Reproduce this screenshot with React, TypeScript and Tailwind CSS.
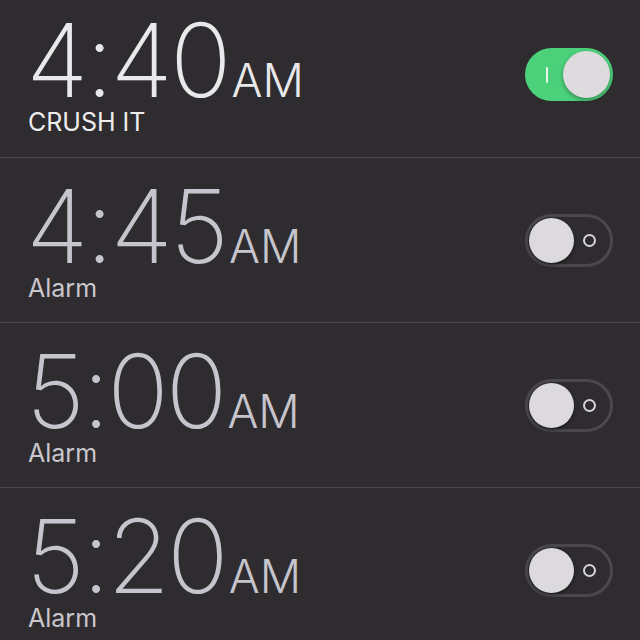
import React from 'react';

type Alarm = { time: string; label: string; on: boolean };

const ALARMS: Alarm[] = [
  { time: '4:40', label: 'CRUSH IT', on: true },
  { time: '4:45', label: 'Alarm', on: false },
  { time: '5:00', label: 'Alarm', on: false },
  { time: '5:20', label: 'Alarm', on: false },
];

function Toggle({ on }: { on: boolean }) {
  if (on) {
    return (
      <div className="relative h-[53px] w-[88px] shrink-0 rounded-full bg-[#4cd17b]">
        <span className="absolute left-[21px] top-[19px] h-[16px] w-[2px] rounded bg-[#e6f7ea]" />
        <span className="absolute right-[3px] top-[3px] h-[47px] w-[47px] rounded-full bg-[#dddbde] shadow-[0_2px_4px_rgba(0,0,0,0.35)]" />
      </div>
    );
  }
  return (
    <div className="relative h-[53px] w-[88px] shrink-0 rounded-full border-[3px] border-[#4a474d] bg-[#2f2c2f]">
      <span className="absolute left-[1px] top-[1px] h-[45px] w-[45px] rounded-full bg-[#dcdadd] shadow-[0_2px_4px_rgba(0,0,0,0.4)]" />
      <span className="absolute right-[14px] top-[17px] h-[13px] w-[13px] rounded-full border-2 border-[#d6d4d9]" />
    </div>
  );
}

function AlarmRow({ alarm, first }: { alarm: Alarm; first: boolean }) {
  const timeColor = alarm.on ? 'text-[#e9e8ea]' : 'text-[#c6c4cc]';
  const labelColor = alarm.on ? 'text-[#ececee]' : 'text-[#c9c7cd]';
  return (
    <div
      className={`flex items-center justify-between pl-[26px] pr-[27px] ${
        first ? 'h-[157px] pb-[8px]' : 'h-[165px] border-t border-[#4a474b]'
      }`}
    >
      <div className="flex flex-col pt-[2px]">
        <div className={`flex items-baseline ${timeColor}`}>
          <span className="text-[102px] font-extralight leading-[92px] tracking-[-3px]">{alarm.time}</span>
          <span className="ml-[3px] text-[46px] font-light leading-none">AM</span>
        </div>
        <span className={`mt-[1px] pl-[2px] text-[25px] leading-[30px] ${labelColor}`}>{alarm.label}</span>
      </div>
      <Toggle on={alarm.on} />
    </div>
  );
}

export default function App() {
  return (
    <div className="h-[640px] w-[640px] overflow-hidden bg-[#2f2c2f] font-['Inter','Noto_Sans',sans-serif]">
      {ALARMS.map((a, i) => (
        <AlarmRow key={a.time} alarm={a} first={i === 0} />
      ))}
    </div>
  );
}
